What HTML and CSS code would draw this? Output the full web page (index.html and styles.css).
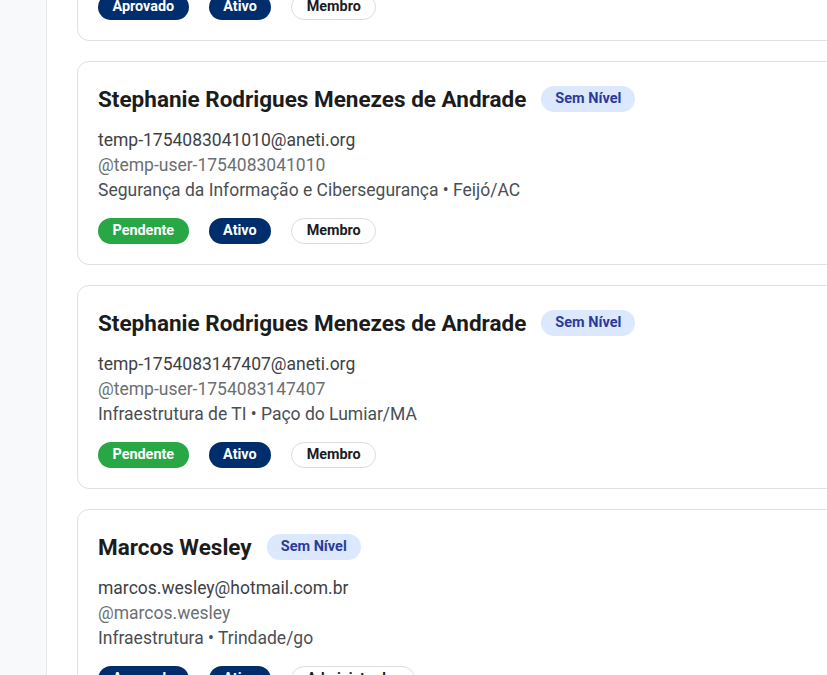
FILE: index.html
```html
<!DOCTYPE html>
<html lang="pt-BR">
<head>
<meta charset="utf-8">
<title>Usuários</title>
<link rel="stylesheet" href="styles.css">
</head>
<body>
<div class="layout">
  <aside class="sidebar"></aside>
  <main class="main">
    <div class="list">
      <article class="card">
        <div class="head"><h2 class="name">João Pedro Almeida</h2><span class="level">Sem Nível</span></div>
        <div class="info">
          <div class="email">joao.almeida@aneti.org</div>
          <div class="user">@joao.almeida</div>
          <div class="dept">Desenvolvimento • São Paulo/SP</div>
        </div>
        <div class="tags"><span class="tag approved">Aprovado</span><span class="tag active">Ativo</span><span class="tag role">Membro</span></div>
      </article>
      <article class="card">
        <div class="head"><h2 class="name">Stephanie Rodrigues Menezes de Andrade</h2><span class="level">Sem Nível</span></div>
        <div class="info">
          <div class="email">temp-1754083041010@aneti.org</div>
          <div class="user">@temp-user-1754083041010</div>
          <div class="dept">Segurança da Informação e Cibersegurança • Feijó/AC</div>
        </div>
        <div class="tags"><span class="tag pending">Pendente</span><span class="tag active">Ativo</span><span class="tag role">Membro</span></div>
      </article>
      <article class="card">
        <div class="head"><h2 class="name">Stephanie Rodrigues Menezes de Andrade</h2><span class="level">Sem Nível</span></div>
        <div class="info">
          <div class="email">temp-1754083147407@aneti.org</div>
          <div class="user">@temp-user-1754083147407</div>
          <div class="dept">Infraestrutura de TI • Paço do Lumiar/MA</div>
        </div>
        <div class="tags"><span class="tag pending">Pendente</span><span class="tag active">Ativo</span><span class="tag role">Membro</span></div>
      </article>
      <article class="card">
        <div class="head"><h2 class="name">Marcos Wesley</h2><span class="level">Sem Nível</span></div>
        <div class="info">
          <div class="email">marcos.wesley@hotmail.com.br</div>
          <div class="user">@marcos.wesley</div>
          <div class="dept">Infraestrutura • Trindade/go</div>
        </div>
        <div class="tags"><span class="tag approved">Aprovado</span><span class="tag active">Ativo</span><span class="tag role">Administrador</span></div>
      </article>
    </div>
  </main>
</div>
</body>
</html>
```
FILE: styles.css
```css
* { box-sizing: border-box; }
html, body { margin: 0; padding: 0; height: 100%; overflow: hidden; background: #fff; }
body { font-family: Roboto, "Noto Sans", sans-serif; color: #1f1f1f; }
.layout { display: flex; height: 675px; overflow: hidden; }
.sidebar { width: 47px; flex: 0 0 47px; background: #f8f9fb; border-right: 1px solid #e6e8eb; }
.main { flex: 1; padding-left: 30px; overflow: hidden; }
.list { display: flex; flex-direction: column; gap: 20px; margin-top: -163px; width: 820px; }
.card { border: 1px solid #e0e0e0; border-radius: 12px; padding: 20px; background: #fff; }
.head { display: flex; align-items: center; gap: 15px; height: 34px; }
.name { margin: 0; font-size: 22.5px; font-weight: 700; color: #1c1c1c; line-height: 34px; }
.level { background: #dce8fd; color: #2a3b9e; font-size: 14.5px; font-weight: 700; height: 26px; line-height: 26px; padding: 0 14px; border-radius: 13px; }
.info { margin-top: 12px; font-size: 17.5px; line-height: 25px; }
.email { color: #3d4146; }
.user { color: #6b6f74; }
.dept { color: #4a4f55; }
.tags { display: flex; gap: 20px; margin-top: 15px; }
.tag { height: 26px; line-height: 26px; padding: 0 14.5px; border-radius: 13px; font-size: 14.4px; font-weight: 700; }
.pending { background: #28a745; color: #fff; }
.approved { background: #002d6b; color: #fff; }
.active { background: #002d6b; color: #fff; }
.role { background: #fff; color: #1c1c1c; border: 1px solid #dcdcdc; line-height: 24px; }
```
